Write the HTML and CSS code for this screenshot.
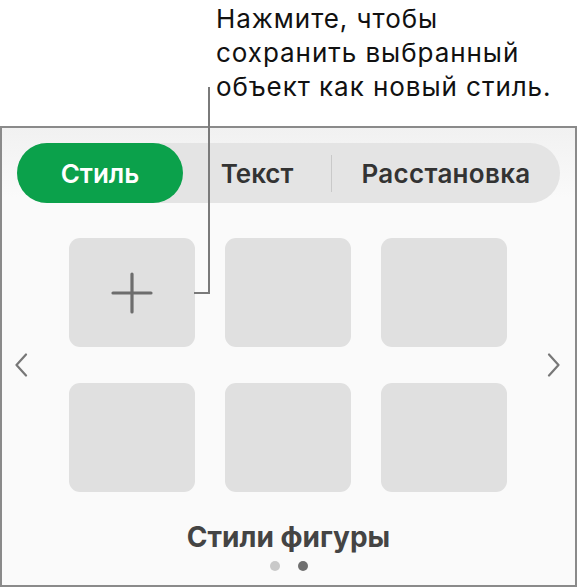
FILE: index.html
```html
<!DOCTYPE html>
<html lang="ru">
<head>
    <meta charset="UTF-8">
    <title>Стили фигуры</title>
    <link rel="stylesheet" href="styles.css">
</head>
<body>
    <div class="callout">Нажмите, чтобы<br>сохранить выбранный<br>объект как новый стиль.</div>

    <div class="panel">
        <div class="segments">
            <div class="seg active">Стиль</div>
            <div class="seg seg-text">Текст</div>
            <div class="sep"></div>
            <div class="seg seg-arrange">Расстановка</div>
        </div>

        <div class="gallery">
            <svg class="chevron" width="14" height="24" viewBox="0 0 14 24">
                <path d="M12 1.5 L2.5 12 L12 22.5" />
            </svg>
            <div class="tiles">
                <div class="tile">
                    <svg width="42" height="42" viewBox="0 0 42 42">
                        <path d="M21 2 V40 M2 21 H40" />
                    </svg>
                </div>
                <div class="tile"></div>
                <div class="tile"></div>
                <div class="tile"></div>
                <div class="tile"></div>
                <div class="tile"></div>
            </div>
            <svg class="chevron" width="14" height="24" viewBox="0 0 14 24">
                <path d="M2 1.5 L11.5 12 L2 22.5" />
            </svg>
        </div>

        <div class="title">Стили фигуры</div>
        <div class="dots">
            <span class="dot"></span>
            <span class="dot current"></span>
        </div>
    </div>

    <!-- линия-выноска от подписи к кнопке «+» -->
    <svg class="leader" width="20" height="210" viewBox="0 0 20 210">
        <path d="M15 0 V206 H0" />
    </svg>
</body>
</html>
```

FILE: styles.css
```css
body {
    margin: 0;
    width: 577px;
    height: 587px;
    position: relative;
    overflow: hidden;
    background: #fff;
    font-family: Inter, Roboto, "Noto Sans", sans-serif;
}
.callout {
    padding: 2px 0 0 216px;
    font-size: 26px;
    line-height: 34px;
    letter-spacing: 0.95px;
    color: #111;
    height: 102px;
}
.panel {
    margin-top: 22px;
    height: 461px;
    box-sizing: border-box;
    border: 2px solid #8a8a8a;
    background: linear-gradient(#f1f1f1, #fafafa 70px);
    padding: 15px 15px 0;
}
.segments {
    display: flex;
    align-items: center;
    height: 60px;
    border-radius: 30px;
    background: #e4e4e4;
}
.seg {
    height: 60px;
    display: flex;
    align-items: center;
    justify-content: center;
    font-size: 26px;
    font-weight: 600;
    color: #333;
}
.seg.active {
    width: 166px;
    border-radius: 30px;
    background: #0ba14b;
    color: #fff;
}
.seg-text {
    width: 148px;
}
.seg-arrange {
    flex: 1;
    letter-spacing: 0.3px;
}
.sep {
    width: 1px;
    height: 37px;
    background: #c9c9c9;
}
.gallery {
    margin-top: 35px;
    display: flex;
    align-items: center;
    justify-content: space-between;
    margin-left: -3px;
    margin-right: -1px;
}
.chevron path {
    fill: none;
    stroke: #777;
    stroke-width: 2.2;
    stroke-linecap: round;
    stroke-linejoin: round;
}
.tiles {
    display: grid;
    grid-template-columns: repeat(3, 126px);
    grid-auto-rows: 109px;
    column-gap: 30px;
    row-gap: 36px;
}
.tile {
    background: #e0e0e0;
    border-radius: 11px;
    display: flex;
    align-items: center;
    justify-content: center;
}
.tile path {
    stroke: #6d6d6d;
    stroke-width: 3.2;
    stroke-linecap: round;
    fill: none;
}
.title {
    margin-top: 27px;
    text-align: center;
    font-size: 28px;
    font-weight: 700;
    line-height: 36px;
    color: #444;
}
.dots {
    display: flex;
    justify-content: center;
    gap: 18px;
    margin-top: 6px;
}
.dot {
    width: 10px;
    height: 10px;
    border-radius: 50%;
    background: #c9c9c9;
}
.dot.current {
    background: #6f6f6f;
}
.leader {
    position: absolute;
    left: 194px;
    top: 87px;
}
.leader path {
    fill: none;
    stroke: #7a7a7a;
    stroke-width: 2;
}
```
